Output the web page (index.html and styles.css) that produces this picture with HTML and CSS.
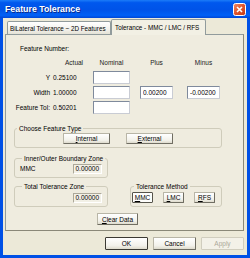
FILE: index.html
```html
<!DOCTYPE html>
<html lang="en">

<head>
    <meta charset="UTF-8">
    <meta name="viewport" content="width=device-width, initial-scale=1.0">
    <title>Feature Tolerance</title>

    <link rel="stylesheet" href="styles.css">

</head>

<body>
    <div class="window">
        <div class="titlebar">
            <span class="title">Feature Tolerance</span>
            <span class="close">
                <svg width="13" height="13" viewBox="0 0 13 13">
                    <defs>
                        <linearGradient id="cg" x1="0" y1="0" x2="1" y2="1">
                            <stop offset="0" stop-color="#F08C6C" />
                            <stop offset="0.5" stop-color="#E0552C" />
                            <stop offset="1" stop-color="#C23A14" />
                        </linearGradient>
                    </defs>
                    <rect x="0.5" y="0.5" width="12" height="12" rx="2" fill="url(#cg)" stroke="#fff" />
                    <path d="M4 4 L9 9 M9 4 L4 9" stroke="#fff" stroke-width="1.6" />
                </svg>
            </span>
        </div>

        <div class="client">
            <div class="tabs">
                <div class="tab">BiLateral Tolerance ~ 2D Features</div>
                <div class="tab active">Tolerance - MMC / LMC / RFS</div>
            </div>

            <div class="panel">
                <div class="feature-number">Feature Number:</div>

                <div class="grid">
                    <span></span>
                    <span class="head actual">Actual</span>
                    <span class="head nominal">Nominal</span>
                    <span class="head plus">Plus</span>
                    <span class="head minus">Minus</span>

                    <span class="row-label">Y</span>
                    <span class="val">0.25100</span>
                    <input class="field nominal" type="text">
                    <span></span>
                    <span></span>

                    <span class="row-label">Width</span>
                    <span class="val">1.00000</span>
                    <input class="field nominal" type="text">
                    <input class="field plus" type="text" value="0.00200">
                    <input class="field minus" type="text" value="-0.00200">

                    <span class="row-label">Feature Tol:</span>
                    <span class="val">0.50201</span>
                    <input class="field nominal" type="text">
                    <span></span>
                    <span></span>
                </div>

                <fieldset class="group choose">
                    <legend>Choose Feature Type</legend>
                    <div class="choose-buttons">
                        <button class="btn wide"><u>I</u>nternal</button>
                        <button class="btn wide"><u>E</u>xternal</button>
                    </div>
                </fieldset>

                <fieldset class="group zone boundary">
                    <legend>Inner/Outer Boundary Zone</legend>
                    <div class="zone-row">
                        <span>MMC</span>
                        <span class="readout">0.00000</span>
                    </div>
                </fieldset>

                <div class="lower">
                    <fieldset class="group zone">
                        <legend>Total Tolerance Zone</legend>
                        <div class="zone-row end">
                            <span class="readout">0.00000</span>
                        </div>
                    </fieldset>

                    <fieldset class="group method">
                        <legend>Tolerance Method</legend>
                        <div class="method-buttons">
                            <button class="btn small pressed"><u>M</u>MC</button>
                            <button class="btn small"><u>L</u>MC</button>
                            <button class="btn small"><u>R</u>FS</button>
                        </div>
                    </fieldset>
                </div>

                <button class="btn clear"><u>C</u>lear Data</button>
            </div>

            <div class="actions">
                <button class="btn action default">OK</button>
                <button class="btn action">Cancel</button>
                <button class="btn action disabled">Apply</button>
            </div>
        </div>
    </div>
</body>

</html>
```

FILE: styles.css
```css
* {
    box-sizing: border-box;
}

body {
    margin: 0;
    font-family: "Liberation Sans", Arial, sans-serif;
    font-size: 6.5px;
    line-height: 9px;
    color: #000;
}

.window {
    width: 250px;
    height: 258px;
    display: flex;
    flex-direction: column;
    background: #0050E6;
}

.titlebar {
    height: 18px;
    display: flex;
    align-items: center;
    justify-content: space-between;
    padding: 0 4px 0 5px;
    background: linear-gradient(#1C7CF8 0, #0058EE 15%, #0053E8 55%, #0060F6 85%, #0046D6 100%);
}

.title {
    color: #fff;
    font-weight: bold;
    font-size: 8.8px;
    text-shadow: 1px 1px 0 #0A2A8A;
}

.close {
    display: flex;
}

.client {
    flex: 1;
    display: flex;
    flex-direction: column;
    margin: 0 3px 3px;
    padding: 1px 3px 0 2px;
    background: #ECE9D8;
}

.tabs {
    display: flex;
    align-items: flex-end;
    height: 16px;
    padding-left: 2px;
    margin-bottom: -1px;
    position: relative;
    z-index: 1;
}

.tab {
    width: 104px;
    height: 13px;
    margin-bottom: 1px;
    padding: 2px 0 0 2px;
    border: 1px solid #919B9C;
    border-bottom: none;
    border-radius: 2px 2px 0 0;
    background: linear-gradient(#FFFFFF, #F3F2EC 60%, #E4E2D6);
    white-space: nowrap;
    font-size: 6.3px;
}

.tab.active {
    width: 95px;
    height: 16px;
    margin-bottom: 0;
    padding: 3px 0 0 3px;
    background: #F2F0E4;
}

.panel {
    height: 197px;
    display: flex;
    flex-direction: column;
    align-items: flex-start;
    padding: 9px 0 0 8px;
    border: 1px solid #919B9C;
    border-right-color: #8A8878;
    border-bottom-color: #8A8878;
    background: #EFECDF;
}

.feature-number {
    margin-left: 6px;
}

.grid {
    display: grid;
    grid-template-columns: 36px 40px 44px 46px 46px;
    grid-template-rows: 12px 15px 15px 15px;
    align-items: center;
    margin-top: 5px;
    white-space: nowrap;
}

.head {
    align-self: start;
    color: #222;
}

.head.actual {
    padding-left: 15px;
}

.nominal {
    margin-left: 3px;
    width: 37px;
    text-align: center;
}

.plus {
    margin-left: 6px;
    width: 33px;
    text-align: center;
}

.minus {
    margin-left: 7px;
    width: 33px;
    text-align: center;
}

.row-label {
    justify-self: end;
}

.val {
    padding-left: 3px;
}

.field {
    height: 13px;
    padding: 0 2px;
    font: inherit;
    text-align: left;
    background: #fff;
    border: 1px solid #7F8A9C;
    border-right-color: #C9CCD4;
    border-bottom-color: #C9CCD4;
}

.group {
    margin: 0;
    padding: 0 0 3px;
    border: 1px solid #CFCCBB;
    border-radius: 3px;
    min-inline-size: 0;
}

.group legend {
    padding: 0 2px;
    margin-left: 2px;
    white-space: nowrap;
}

.choose {
    width: 208px;
    margin-top: 9px;
}

.choose-buttons {
    display: flex;
    gap: 16px;
    padding-left: 48px;
}

.zone {
    width: 94px;
    padding: 0 5px 3px;
}

.boundary {
    margin-top: 6px;
}

.zone-row {
    display: flex;
    align-items: center;
    justify-content: space-between;
    height: 11px;
}

.zone-row.end {
    justify-content: flex-end;
}

.readout {
    width: 29px;
    height: 10px;
    line-height: 8px;
    padding-right: 2px;
    text-align: right;
    border: 1px solid #ACA899;
    border-right-color: #fff;
    border-bottom-color: #fff;
    background: #F2F0E6;
}

.lower {
    display: flex;
    align-items: flex-end;
    gap: 22px;
    margin-top: 4px;
}

.lower .zone-row {
    margin-top: 1px;
}

.method {
    width: 92px;
    padding: 1px 0 3px 1px;
}

.method-buttons {
    display: flex;
    gap: 10px;
}

.btn {
    height: 11px;
    padding: 0;
    font: inherit;
    line-height: 9px;
    color: #000;
    background: linear-gradient(#FFFFFF, #F2F1EA 70%, #DEDBCD);
    border: 1px solid #B8B5A6;
    border-right-color: #6F6D62;
    border-bottom-color: #6F6D62;
    border-radius: 1px;
}

.btn.wide {
    width: 47px;
}

.btn.small {
    width: 21px;
}

.btn.pressed {
    background: #FDFDFB;
    border-color: #55534A;
}

.btn.clear {
    width: 41px;
    height: 12px;
    margin: 6px 0 0 83px;
}

.actions {
    display: flex;
    justify-content: flex-end;
    gap: 5px;
    margin-top: 6px;
}

.btn.action {
    width: 43px;
    height: 13px;
}

.btn.default {
    border: 1px solid #3C3A33;
}

.btn.disabled {
    color: #ACA899;
    border-color: #D0CDBE;
    background: #F3F1E8;
}
```
